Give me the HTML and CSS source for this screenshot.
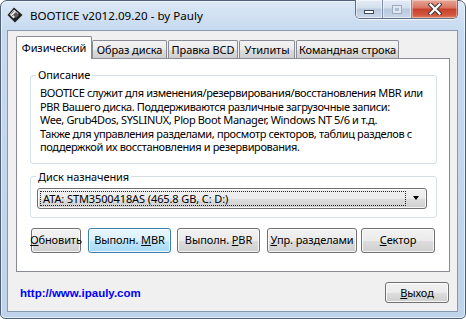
FILE: index.html
```html
<!DOCTYPE html>
<html>
<head>
<meta charset="utf-8">
<link rel="stylesheet" href="styles.css">
</head>
<body>
<div class="window">
  <div class="titlebar">
    <svg class="app-icon" width="16" height="16" viewBox="0 0 16 16">
      <polygon points="7,0.5 15.5,8 8,15.5 0.5,8" fill="#1e1e1e"/>
      <polygon points="7,2.5 11.5,6.5 6.5,11.5 2.5,7.5" fill="#e8e8e8"/>
      <polygon points="9,5 12,8 9,11 6,8" fill="#5a5a5a"/>
      <line x1="3.5" y1="7.5" x2="7" y2="4" stroke="#888" stroke-width="1"/>
      <line x1="5" y1="9" x2="8.5" y2="5.5" stroke="#888" stroke-width="1"/>
    </svg>
    <div class="title">BOOTICE v2012.09.20 - by Pauly</div>
    <div class="caption-buttons">
      <div class="cbtn cbtn-min"><span class="min-glyph"></span></div>
      <div class="cbtn cbtn-max"><span class="max-glyph"></span></div>
      <div class="cbtn cbtn-close">
        <svg width="14" height="12" viewBox="0 0 14 12">
          <path d="M2.5 1.5 L11.5 10.5 M11.5 1.5 L2.5 10.5" stroke="#3b3b3b" stroke-width="4.2" stroke-linecap="square"/>
          <path d="M2.5 1.5 L11.5 10.5 M11.5 1.5 L2.5 10.5" stroke="#ffffff" stroke-width="2.2" stroke-linecap="square"/>
        </svg>
      </div>
    </div>
  </div>
  <div class="client">
    <div class="tabs">
      <div class="tab tab-active w1">Физический</div>
      <div class="tab w2">Образ диска</div>
      <div class="tab w3">Правка BCD</div>
      <div class="tab w4">Утилиты</div>
      <div class="tab w5">Командная строка</div>
    </div>
    <div class="panel">
      <fieldset class="group group-desc">
        <legend>Описание</legend>
        <div class="desc">BOOTICE служит для изменения/резервирования/восстановления MBR или<br>PBR Вашего диска. Поддерживаются различные загрузочные записи:<br>Wee, Grub4Dos, SYSLINUX, Plop Boot Manager, Windows NT 5/6 и т.д.<br>Также для управления разделами, просмотр секторов, таблиц разделов с<br>поддержкой их восстановления и резервирования.</div>
      </fieldset>
      <fieldset class="group group-disk">
        <legend>Диск назначения</legend>
        <div class="combo">
          <div class="combo-focus">ATA: STM3500418AS (465.8 GB, C: D:)</div>
          <div class="combo-arrow"></div>
        </div>
      </fieldset>
      <div class="actions">
        <div class="btn b-refresh"><span><u>О</u>бновить</span></div>
        <div class="btn btn-hot b-mbr"><span>Выполн. <u>M</u>BR</span></div>
        <div class="btn b-pbr"><span>Выполн. <u>P</u>BR</span></div>
        <div class="btn b-part"><span><u>У</u>пр. разделами</span></div>
        <div class="btn b-sect"><span><u>С</u>ектор</span></div>
      </div>
    </div>
    <div class="footer">
      <span class="link">http://www.ipauly.com</span>
      <div class="btn b-exit"><span><u>В</u>ыход</span></div>
    </div>
  </div>
</div>
</body>
</html>
```
FILE: styles.css
```css
* { box-sizing: border-box; }
html, body { margin: 0; padding: 0; }
body {
  width: 466px;
  height: 319px;
  overflow: hidden;
  background: #ffffff;
  font-family: "Noto Sans", "Open Sans", sans-serif;
  font-size: 11px;
  letter-spacing: -0.1px;
  color: #000;
}
.window {
  width: 466px;
  height: 319px;
  border: 1px solid #4e6179;
  border-radius: 7px 7px 5px 5px;
  background: linear-gradient(to bottom, #dbe8f6 0px, #c6d9ee 30px, #bfd3ea 100%);
  display: flex;
  flex-direction: column;
  box-shadow: inset 0 0 0 1px rgba(255,255,255,0.55);
}
.titlebar {
  height: 29px;
  flex: none;
  display: flex;
  align-items: flex-start;
  padding-left: 6px;
}
.app-icon { margin-top: 6px; flex: none; }
.title {
  margin-left: 7px;
  margin-top: 6px;
  line-height: 17px;
  font-size: 11.6px;
  letter-spacing: 0;
  color: #000;
  white-space: nowrap;
}
.caption-buttons {
  margin-left: auto;
  margin-right: 7px;
  margin-top: -1px;
  display: flex;
  height: 19px;
  border: 1px solid #5f7089;
  border-top: none;
  border-radius: 0 0 5px 5px;
  overflow: hidden;
  box-shadow: 0 1px 0 rgba(255,255,255,0.7);
}
.cbtn {
  height: 18px;
  display: flex;
  align-items: center;
  justify-content: center;
}
.cbtn-min, .cbtn-max {
  width: 27px;
  background: linear-gradient(to bottom, #e3ebf5 0%, #d4e0ee 45%, #b8c9de 50%, #c9d7e8 100%);
  border-right: 1px solid #7b8ca3;
  box-shadow: inset 0 0 0 1px rgba(255,255,255,0.5);
}
.cbtn-max { width: 29px; }
.min-glyph {
  width: 10px;
  height: 4px;
  margin-top: 6px;
  background: #fff;
  border: 1px solid #3c4a5c;
}
.max-glyph {
  width: 10px;
  height: 9px;
  border: 1px solid #9aabbf;
  box-shadow: inset 0 0 0 2px #dfe7f1, inset 0 0 0 3px #a9b8ca;
}
.cbtn-close {
  width: 45px;
  background: linear-gradient(to bottom, #e8a697 0%, #d9735f 45%, #c6402b 50%, #d4583f 85%, #e38b6c 100%);
  box-shadow: inset 0 0 0 1px rgba(255,255,255,0.35);
}
.client {
  flex: 1;
  margin: 0 7px 6px 6px;
  border: 1px solid #8799b0;
  background: #f0f0f0;
  display: flex;
  flex-direction: column;
}
.tabs {
  display: flex;
  align-items: flex-end;
  height: 22px;
  margin: 5px 7px 0 8px;
  flex: none;
}
.tab {
  position: relative;
  height: 18px;
  border: 1px solid #898c95;
  border-bottom: none;
  border-radius: 2px 2px 0 0;
  background: linear-gradient(to bottom, #f3f3f3 0%, #ebebeb 50%, #dddddd 51%, #cfcfcf 100%);
  text-align: center;
  line-height: 18px;
  white-space: nowrap;
  margin-left: 1px;
}
.tab-active {
  height: 23px;
  margin-left: 0;
  margin-bottom: -1px;
  background: #ffffff;
  line-height: 22px;
  z-index: 2;
}
.w1 { width: 76px; }
.w2 { width: 75px; margin-left: 0; }
.w3 { width: 70px; }
.w4 { width: 56px; }
.w5 { width: 103px; }
.panel {
  height: 214px;
  margin: 0 7px 0 8px;
  border: 1px solid #898c95;
  background: #ffffff;
  padding: 8px 12px 0 13px;
  flex: none;
}
.group {
  margin: 0;
  border: 1px solid #d5dfe5;
  border-radius: 3px;
  padding: 3px 9px 9px 5px;
  min-width: 0;
}
.group legend {
  padding: 0 2px;
  margin-left: 0;
  line-height: 16px;
  color: #000;
}
.desc {
  margin-left: 4px;
  line-height: 13.5px;
  letter-spacing: -0.36px;
  white-space: nowrap;
  color: #000;
}
.group-disk {
  margin-top: 5px;
  padding: 3px 9px 8px 5px;
}
.combo {
  margin-left: 1px;
  height: 21px;
  border: 1px solid #707070;
  border-radius: 3px;
  background: linear-gradient(to bottom, #f2f2f2 0%, #ebebeb 50%, #dddddd 51%, #cfcfcf 100%);
  box-shadow: inset 0 0 0 1px rgba(255,255,255,0.75);
  display: flex;
  align-items: center;
  padding: 0 3px 0 2px;
}
.combo-focus {
  flex: 1;
  height: 15px;
  border: 1px dotted #222;
  line-height: 13px;
  padding-left: 2px;
  white-space: nowrap;
}
.combo-arrow {
  width: 0;
  height: 0;
  margin: 0 4px 0 7px;
  border-left: 3.5px solid transparent;
  border-right: 3.5px solid transparent;
  border-top: 4px solid #000;
}
.actions {
  display: flex;
  margin-top: 10px;
  margin-left: 1px;
}
.btn {
  height: 25px;
  border: 1px solid #707070;
  border-radius: 3px;
  background: linear-gradient(to bottom, #f2f2f2 0%, #ebebeb 50%, #dddddd 51%, #cfcfcf 100%);
  box-shadow: inset 0 0 0 1px rgba(255,255,255,0.8);
  display: flex;
  align-items: center;
  justify-content: center;
  white-space: nowrap;
  line-height: 16px;
  flex: none;
}
.btn-hot {
  border-color: #3c7fb1;
  background: linear-gradient(to bottom, #eaf6fd 0%, #d9f0fc 50%, #bee6fd 51%, #a7d9f5 100%);
}
.b-refresh { width: 50px; overflow: visible; }
.b-mbr { width: 83px; margin-left: 7px; }
.b-pbr { width: 83px; margin-left: 6px; }
.b-part { width: 90px; margin-left: 7px; }
.b-sect { width: 74px; margin-left: 4px; }
.footer {
  flex: 1;
  display: flex;
  align-items: flex-start;
  justify-content: space-between;
  padding: 10px 8px 0 12px;
}
.link {
  margin-top: 3px;
  font-family: "Liberation Sans", Arial, sans-serif;
  font-weight: bold;
  font-size: 11.5px;
  letter-spacing: 0;
  line-height: 16px;
  color: #0000ff;
}
.b-exit { width: 64px; height: 21px; }
```
